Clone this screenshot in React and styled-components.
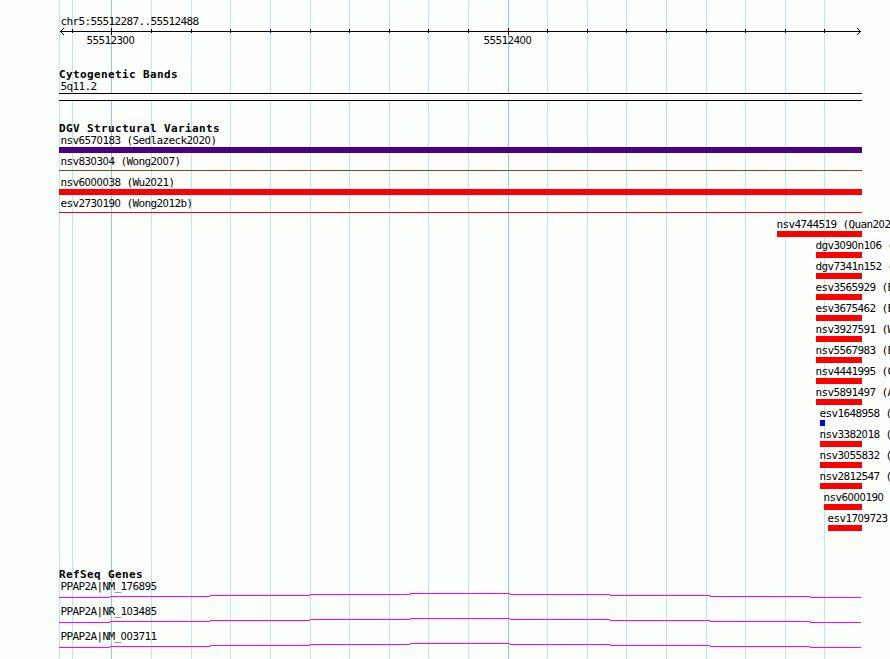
import React from 'react'
import styled, { createGlobalStyle } from 'styled-components'

const GlobalStyle = createGlobalStyle`
  body {
    margin: 0;
    background: #fdfffc;
    overflow: hidden;
  }
`

const Browser = styled.main`
  position: relative;
  width: 890px;
  height: 659px;
  overflow: hidden;
  background: #fdfffc;
  color: #000;
  font-family: "DejaVu Sans Mono", "Liberation Mono", monospace;
  font-size: 11px;
  letter-spacing: -0.622px;
`

const Grid = styled.div`
  position: absolute;
  inset: 0;
  display: flex;
  padding-left: 59px;
`

const GridColumn = styled.div`
  box-sizing: border-box;
  flex: none;
  width: ${p => p.$width}px;
  border-left: 1px solid ${p => (p.$major ? '#87ceeb' : '#afeeee')};
`

const Content = styled.div`
  position: relative;
  display: flex;
  flex-direction: column;
  padding-left: 59px;
`

const Text = styled.div`
  height: 12px;
  line-height: 12px;
  margin-left: ${p => p.$indent || 0}px;
  white-space: pre;
`

const Ruler = styled.header`
  display: flex;
  flex-direction: column;
  height: 69px;
  padding-top: 16px;
  box-sizing: border-box;
`

const Axis = styled.svg`
  display: block;
  width: 803px;
  height: 7px;
  shape-rendering: crispEdges;
`

const AxisLabels = styled.div`
  display: flex;
  gap: 349px;
  padding-left: 27.4px;
`

const AxisLabel = styled(Text)`
  width: 48px;
`

const Track = styled.section`
  height: ${p => p.$height}px;
`

const Title = styled.h2`
  margin: 0;
  height: 12px;
  font-size: 11px;
  line-height: 12px;
  font-weight: bold;
  letter-spacing: 0.378px;
  white-space: pre;
`

const Band = styled.div`
  box-sizing: border-box;
  width: 803px;
  height: 8px;
  border: solid #000;
  border-width: 1px 0;
  background: #fdfffc;
`

const Feature = styled.div`
  height: 21px;
  padding-left: ${p => p.$offset}px;
`

const Bar = styled.div`
  width: ${p => p.$width}px;
  height: ${p => (p.$thin ? 1 : 6)}px;
  margin-top: ${p => (p.$thin ? 2 : 0)}px;
  background: ${p => p.$color};
`

const Gene = styled.div`
  height: 25px;
`

const Intron = styled.svg`
  display: block;
  width: 802px;
  height: 5px;
  shape-rendering: crispEdges;
`

// the mono font's zero is dotted, the sans one is plain
const Zero = styled.span`
  display: inline-block;
  width: 6px;
  height: 12px;
  vertical-align: top;
  font-family: "DejaVu Sans Condensed", "DejaVu Sans", sans-serif;
  font-stretch: condensed;
  letter-spacing: 0;
`

const TRACK_START = 59
const TRACK_END = 862

const lines = [
  59, 72, 111, 151, 191, 230, 270, 310, 349, 389, 428,
  468, 508, 547, 587, 626, 666, 706, 745, 785, 824
]
const major = [111, 508]

const variants = [
  { label: 'nsv6570183 (Sedlazeck2020)', start: 59, color: '#4b0082' },
  { label: 'nsv830304 (Wong2007)', start: 59, color: '#8b4513', thin: true },
  { label: 'nsv6000038 (Wu2021)', start: 59, color: '#ff0000' },
  { label: 'esv2730190 (Wong2012b)', start: 59, color: '#ff0000', thin: true },
  { label: 'nsv4744519 (Quan202', start: 777, color: '#ff0000' },
  { label: 'dgv3090n106 (', start: 816, color: '#ff0000' },
  { label: 'dgv7341n152 (', start: 816, color: '#ff0000' },
  { label: 'esv3565929 (E', start: 816, color: '#ff0000' },
  { label: 'esv3675462 (E', start: 816, color: '#ff0000' },
  { label: 'nsv3927591 (W', start: 816, color: '#ff0000' },
  { label: 'nsv5567983 (E', start: 816, color: '#ff0000' },
  { label: 'nsv4441995 (C', start: 816, color: '#ff0000' },
  { label: 'nsv5891497 (A', start: 816, color: '#ff0000' },
  { label: 'esv1648958 (', start: 820, width: 5, color: '#0000ff' },
  { label: 'nsv3382018 (', start: 820, color: '#ff0000' },
  { label: 'nsv3055832 (', start: 820, color: '#ff0000' },
  { label: 'nsv2812547 (', start: 820, color: '#ff0000' },
  { label: 'nsv6000190', start: 824, color: '#ff0000' },
  { label: 'esv1709723', start: 828, color: '#ff0000' }
]

const genes = ['PPAP2A|NM_176895', 'PPAP2A|NR_103485', 'PPAP2A|NM_003711']

// [x, y, width] of every step of the intron line
const steps = [
  [0, 4, 51], [51, 3, 100], [151, 2, 100], [251, 1, 100], [351, 0, 100],
  [451, 1, 100], [551, 2, 100], [651, 3, 100], [751, 4, 51]
]

const plainZeros = label =>
  label.split(/(0)/).map((part, i) => (part === '0' ? <Zero key={i}>0</Zero> : part))

function GridLines() {
  return (
    <Grid>
      {lines.map((x, i) => (
        <GridColumn
          key={x}
          $width={(lines[i + 1] || TRACK_END) - x}
          $major={major.includes(x)}
        />
      ))}
    </Grid>
  )
}

function Scale() {
  return (
    <Axis viewBox="0 0 803 7">
      <rect x="1" y="3" width="801" height="1" />
      {lines.slice(1).map(x => {
        const isMajor = major.includes(x)
        return (
          <rect
            key={x}
            x={x - TRACK_START}
            y={isMajor ? 0 : 1}
            width="1"
            height={isMajor ? 7 : 4}
          />
        )
      })}
      <path d="M2 2h1v1h-1zM3 1h1v1h-1zM4 0h1v1h-1zM2 4h1v1h-1zM3 5h1v1h-1zM4 6h1v1h-1z" />
      <path d="M800 2h1v1h-1zM799 1h1v1h-1zM798 0h1v1h-1zM800 4h1v1h-1zM799 5h1v1h-1zM798 6h1v1h-1z" />
    </Axis>
  )
}

function Variant({ label, start, width, color, thin }) {
  const offset = start - TRACK_START
  return (
    <Feature $offset={offset}>
      <Text $indent={offset === 0 ? 1.4 : -0.6}>{plainZeros(label)}</Text>
      <Bar $width={width || TRACK_END - start} $color={color} $thin={thin} />
    </Feature>
  )
}

export default function App() {
  return (
    <Browser>
      <GlobalStyle />
      <GridLines />
      <Content>
        <Ruler>
          <Text $indent={1.4}>chr5:55512287..55512488</Text>
          <Scale />
          <AxisLabels>
            <AxisLabel>{plainZeros('55512300')}</AxisLabel>
            <AxisLabel>{plainZeros('55512400')}</AxisLabel>
          </AxisLabels>
        </Ruler>
        <Track $height={54}>
          <Title>Cytogenetic Bands</Title>
          <Text $indent={1.4}>5q11.2</Text>
          <Band />
        </Track>
        <Track $height={446}>
          <Title>DGV Structural Variants</Title>
          {variants.map(variant => (
            <Variant key={variant.label} {...variant} />
          ))}
        </Track>
        <Track $height={90}>
          <Title>RefSeq Genes</Title>
          {genes.map(gene => (
            <Gene key={gene}>
              <Text $indent={1.4}>{plainZeros(gene)}</Text>
              <Intron viewBox="0 0 802 5">
                {steps.map(([x, y, width]) => (
                  <rect key={x} x={x} y={y} width={width} height="1" fill="#ff00ff" />
                ))}
              </Intron>
            </Gene>
          ))}
        </Track>
      </Content>
    </Browser>
  )
}
